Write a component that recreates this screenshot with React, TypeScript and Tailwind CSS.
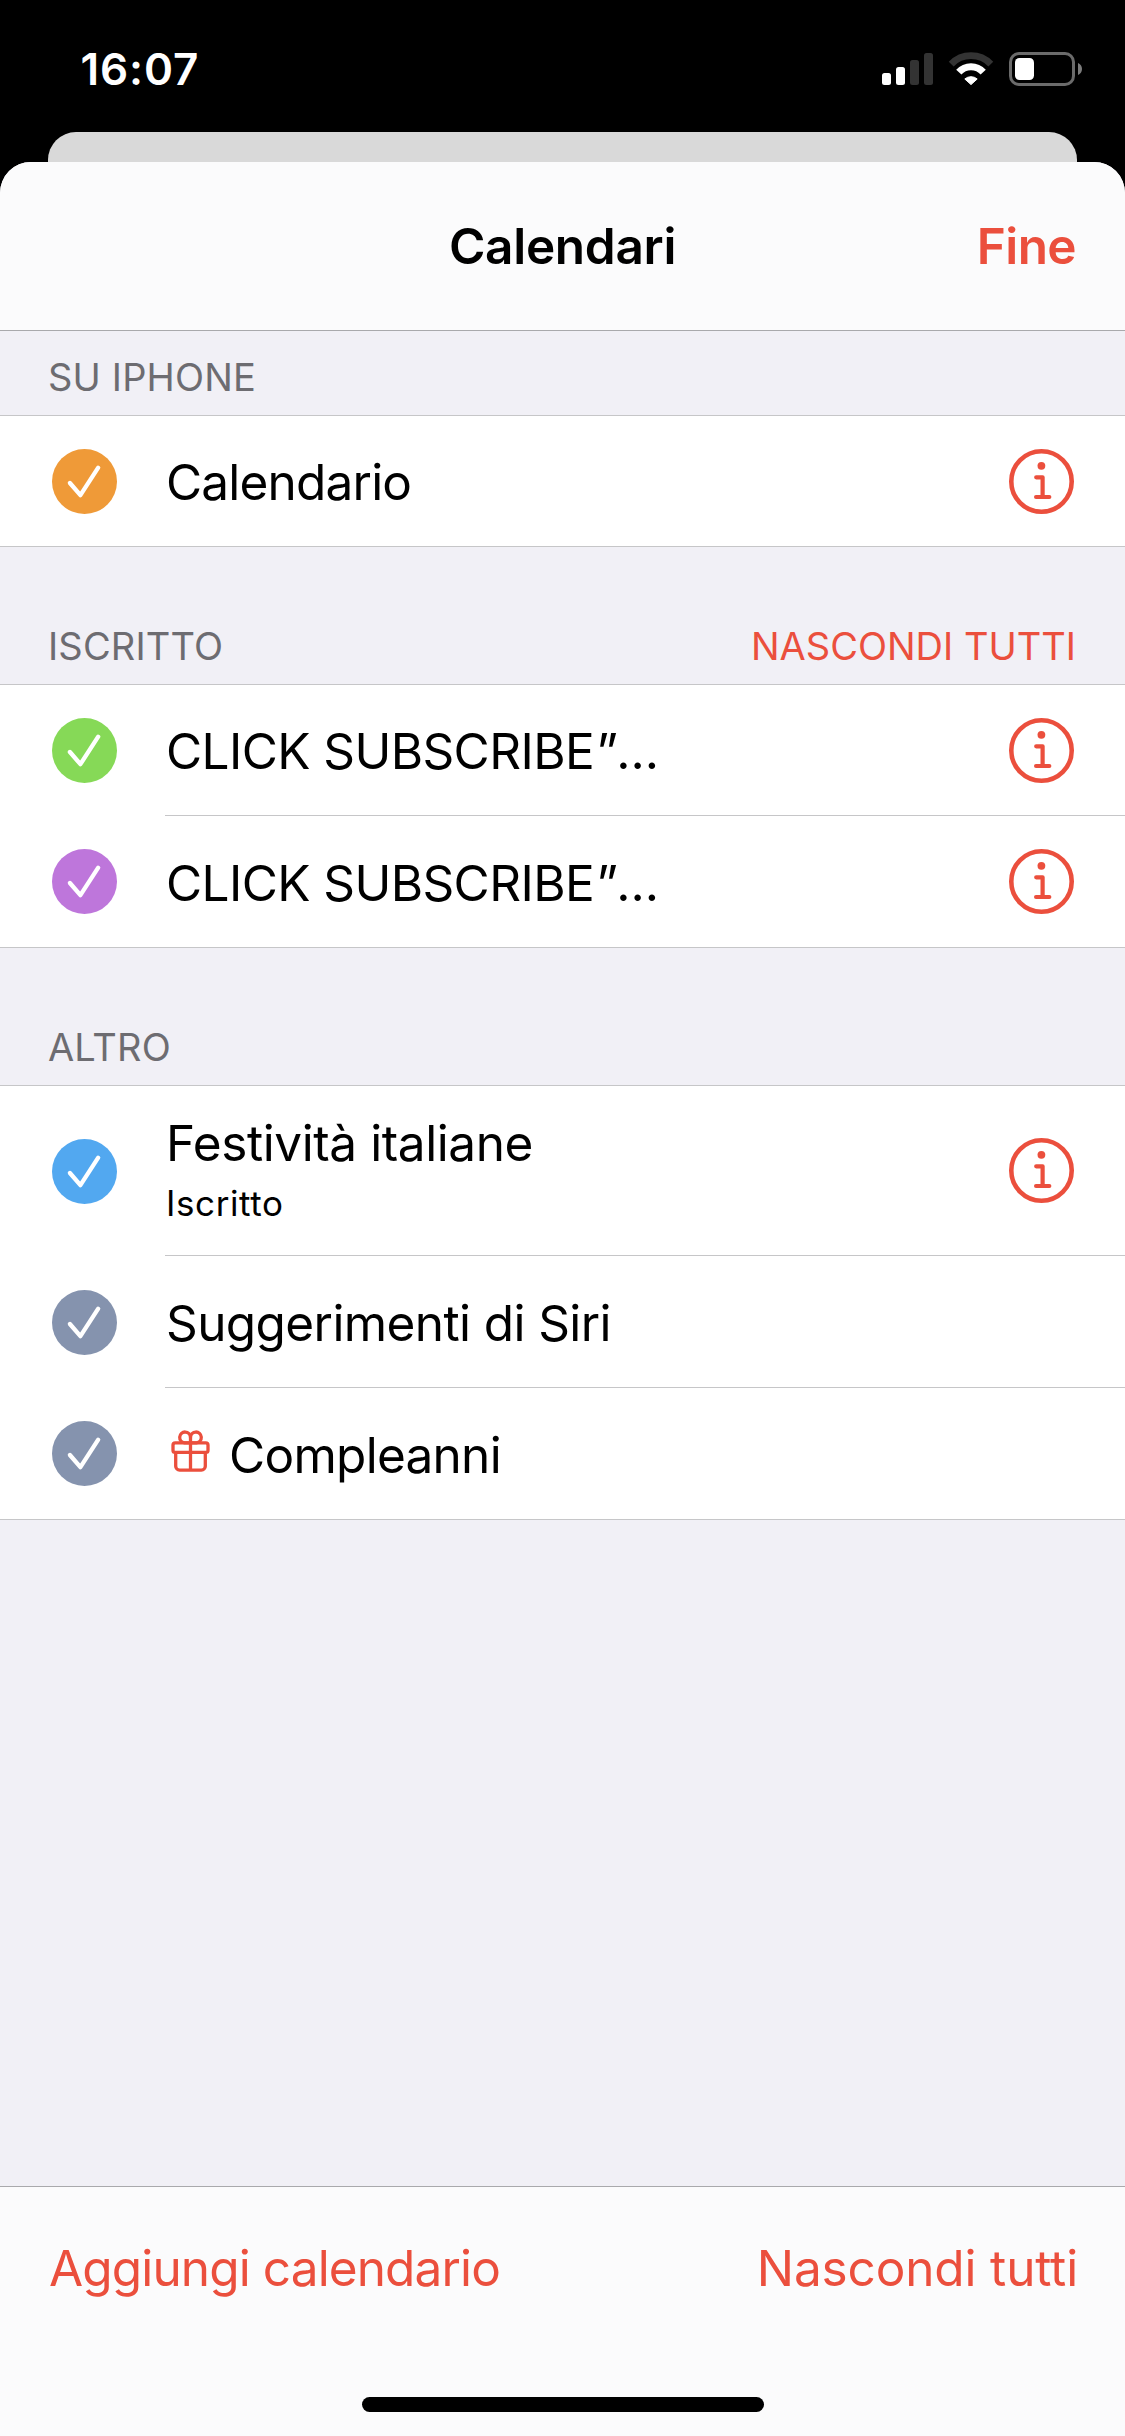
interface CalendarItem {
  id: string;
  name: string;
  truncated?: boolean;
  subtitle?: string;
  color: string;
  tracking: string;
  height: string;
  hasInfo?: boolean;
  hasGift?: boolean;
}

interface CalendarSection {
  id: string;
  title: string;
  action?: string;
  headerHeight: string;
  items: CalendarItem[];
}

const sections: CalendarSection[] = [
  {
    id: 'iphone',
    title: 'SU IPHONE',
    headerHeight: 'h-[84px]',
    items: [
      {
        id: 'calendario',
        name: 'Calendario',
        color: 'text-[#ef9a38]',
        tracking: 'tracking-[-0.8px]',
        height: 'h-[130px]',
        hasInfo: true,
      },
    ],
  },
  {
    id: 'iscritto',
    title: 'ISCRITTO',
    action: 'NASCONDI TUTTI',
    headerHeight: 'h-[137px]',
    items: [
      {
        id: 'click-1',
        name: 'CLICK SUBSCRIBE',
        truncated: true,
        color: 'text-[#86d957]',
        tracking: 'tracking-[-0.59px]',
        height: 'h-[131px]',
        hasInfo: true,
      },
      {
        id: 'click-2',
        name: 'CLICK SUBSCRIBE',
        truncated: true,
        color: 'text-[#be76db]',
        tracking: 'tracking-[-0.59px]',
        height: 'h-[131px]',
        hasInfo: true,
      },
    ],
  },
  {
    id: 'altro',
    title: 'ALTRO',
    headerHeight: 'h-[137px]',
    items: [
      {
        id: 'festivita',
        name: 'Festività italiane',
        subtitle: 'Iscritto',
        color: 'text-[#52a8f0]',
        tracking: 'tracking-[-0.42px]',
        height: 'h-[170px]',
        hasInfo: true,
      },
      {
        id: 'siri',
        name: 'Suggerimenti di Siri',
        color: 'text-[#8593ae]',
        tracking: 'tracking-[-0.6px]',
        height: 'h-[132px]',
      },
      {
        id: 'compleanni',
        name: 'Compleanni',
        color: 'text-[#8593ae]',
        tracking: 'tracking-[-0.72px]',
        height: 'h-[131px]',
        hasGift: true,
      },
    ],
  },
];

function SignalIcon() {
  return (
    <svg width="51" height="34" viewBox="0 0 51 34">
      <rect x="0" y="21" width="9" height="12" rx="2.5" fill="#fff" />
      <rect x="14" y="15" width="9" height="18" rx="2.5" fill="#fff" />
      <rect x="28" y="8" width="9" height="25" rx="2.5" fill="#333" />
      <rect x="42" y="1" width="9" height="32" rx="2.5" fill="#333" />
    </svg>
  );
}

function WifiIcon() {
  return (
    <svg width="46" height="34" viewBox="0 0 46 34" fill="none">
      <path d="M3.2 12.1A27.5 27.5 0 0 1 42.8 12.1" stroke="#333" strokeWidth="6.8" />
      <path d="M10.8 20.2A16.4 16.4 0 0 1 35.2 20.2" stroke="#fff" strokeWidth="7" />
      <path
        d="M16.8 27A9.5 9.5 0 0 1 29.2 27L23 32.6Z"
        fill="#fff"
        stroke="#fff"
        strokeWidth="1"
        strokeLinejoin="round"
      />
    </svg>
  );
}

function BatteryIcon() {
  return (
    <svg width="73" height="34" viewBox="0 0 73 34" fill="none">
      <rect x="1.5" y="1.5" width="63" height="31" rx="8.5" stroke="#6b6b6b" strokeWidth="3" />
      <rect x="6" y="6" width="19" height="22" rx="4.5" fill="#fff" />
      <path d="M69 11C71.4 11.8 73 14.2 73 17S71.4 22.2 69 23Z" fill="#7c7c7c" />
    </svg>
  );
}

function CheckCircle({ color }: { color: string }) {
  return (
    <svg width="65" height="65" viewBox="0 0 65 65" fill="none" className={`shrink-0 ${color}`}>
      <circle cx="32.5" cy="32.5" r="32.5" fill="currentColor" />
      <path
        d="M17.9 34L28.4 46.2L46.2 18.7"
        stroke="#fff"
        strokeWidth="4.3"
        strokeLinecap="round"
        strokeLinejoin="round"
      />
    </svg>
  );
}

function InfoIcon() {
  return (
    <svg
      width="65"
      height="65"
      viewBox="0 0 65 65"
      fill="none"
      stroke="#eb4f3d"
      strokeLinecap="round"
      strokeLinejoin="round"
    >
      <circle cx="32.5" cy="32.5" r="30.2" strokeWidth="4.6" />
      <circle cx="32.4" cy="16.8" r="3.9" fill="#eb4f3d" stroke="none" />
      <path d="M27.2 28.3H33.6V48" strokeWidth="4.2" />
      <path d="M27 48.1H40.4" strokeWidth="4" />
    </svg>
  );
}

function GiftIcon() {
  return (
    <svg
      width="39"
      height="43"
      viewBox="0 0 39 43"
      fill="none"
      stroke="#eb4f3d"
      strokeWidth="3.3"
      strokeLinejoin="round"
    >
      <rect x="2" y="12.8" width="35" height="9.6" rx="2.2" />
      <path d="M4.7 22.4V36.2A3.9 3.9 0 0 0 8.6 40.1H30.4A3.9 3.9 0 0 0 34.3 36.2V22.4" />
      <path d="M19.5 12.8H13.6A5.4 5.4 0 1 1 19.5 7.4V40" />
      <path d="M19.5 12.8H25.4A5.4 5.4 0 1 0 19.5 7.4" />
    </svg>
  );
}

function CalendarRow({ item, isLast }: { item: CalendarItem; isLast: boolean }) {
  return (
    <div className="flex items-stretch bg-white pl-[52px]">
      <div className="flex w-[113px] items-center">
        <CheckCircle color={item.color} />
      </div>
      <div
        className={`flex flex-1 items-center justify-between pr-[51px] ${item.height} ${
          isLast ? '' : 'border-b border-[#c6c6c8]'
        }`}
      >
        <div className={`flex items-center ${item.subtitle ? 'pb-[5px]' : 'pt-[2px]'}`}>
          {item.hasGift && (
            <span className="mr-[18px] ml-[6px] -mt-[6px]">
              <GiftIcon />
            </span>
          )}
          <div className="flex flex-col gap-2 pl-px">
            <span className={`text-[49.5px] leading-[62px] whitespace-nowrap ${item.tracking}`}>
              {item.name}
              {item.truncated && <span className="ml-[2px] tracking-[3.2px]">”…</span>}
            </span>
            {item.subtitle && (
              <span className="text-[35px] leading-[42px] tracking-[0.6px]">{item.subtitle}</span>
            )}
          </div>
        </div>
        {item.hasInfo && (
          <button type="button">
            <InfoIcon />
          </button>
        )}
      </div>
    </div>
  );
}

export default function App() {
  return (
    <div className="flex h-[2436px] w-[1125px] flex-col overflow-hidden bg-black font-['Inter','Liberation_Sans',sans-serif] text-black">
      <div className="flex h-[132px] shrink-0 items-start justify-between pr-[43px] pl-[80.5px]">
        <span className="pt-[42px] text-[44px] leading-[54px] font-semibold tracking-[0.9px] text-white">
          16:07
        </span>
        <div className="flex items-center gap-[15px] pt-[52px]">
          <SignalIcon />
          <WifiIcon />
          <BatteryIcon />
        </div>
      </div>

      {/* Edge of the card behind the sheet */}
      <div className="mx-12 h-[30px] shrink-0 rounded-t-[28px] bg-[#d9d9d9]" />

      <div className="flex flex-1 flex-col overflow-hidden rounded-t-[31px] bg-[#f1f0f6]">
        <header className="grid h-[169px] shrink-0 grid-cols-3 items-center border-b border-[#a9a9ac] bg-[#fbfbfc] px-[49px] text-[49.5px] leading-[60px] font-semibold">
          <span />
          <h1 className="text-center tracking-[-0.3px]">Calendari</h1>
          <button type="button" className="text-right tracking-[-0.6px] text-[#eb4f3d]">
            Fine
          </button>
        </header>

        <main className="flex-1">
          {sections.map((section) => (
            <section key={section.id}>
              <div
                className={`flex items-end justify-between pr-[49px] pb-[17px] pl-[48px] text-[38px] leading-[42px] ${section.headerHeight}`}
              >
                <h2 className="tracking-[0.15px] text-[#6d6c71]">{section.title}</h2>
                {section.action && (
                  <button type="button" className="text-[#eb4f3d]">
                    {section.action}
                  </button>
                )}
              </div>
              <div className="border-y border-[#c6c6c8]">
                {section.items.map((item, index) => (
                  <CalendarRow
                    key={item.id}
                    item={item}
                    isLast={index === section.items.length - 1}
                  />
                ))}
              </div>
            </section>
          ))}
        </main>

        <footer className="flex h-[250px] shrink-0 flex-col border-t border-[#a9a9ac] bg-[#fbfbfc] pt-[51px]">
          <div className="flex justify-between pr-[47px] pl-[49px] text-[49.5px] leading-[60px] text-[#eb4f3d]">
            <button type="button" className="tracking-[-0.87px]">
              Aggiungi calendario
            </button>
            <button type="button" className="tracking-[-0.15px]">
              Nascondi tutti
            </button>
          </div>
          <div className="mx-auto mt-[99px] h-[15px] w-[402px] rounded-full bg-black" />
        </footer>
      </div>
    </div>
  );
}
